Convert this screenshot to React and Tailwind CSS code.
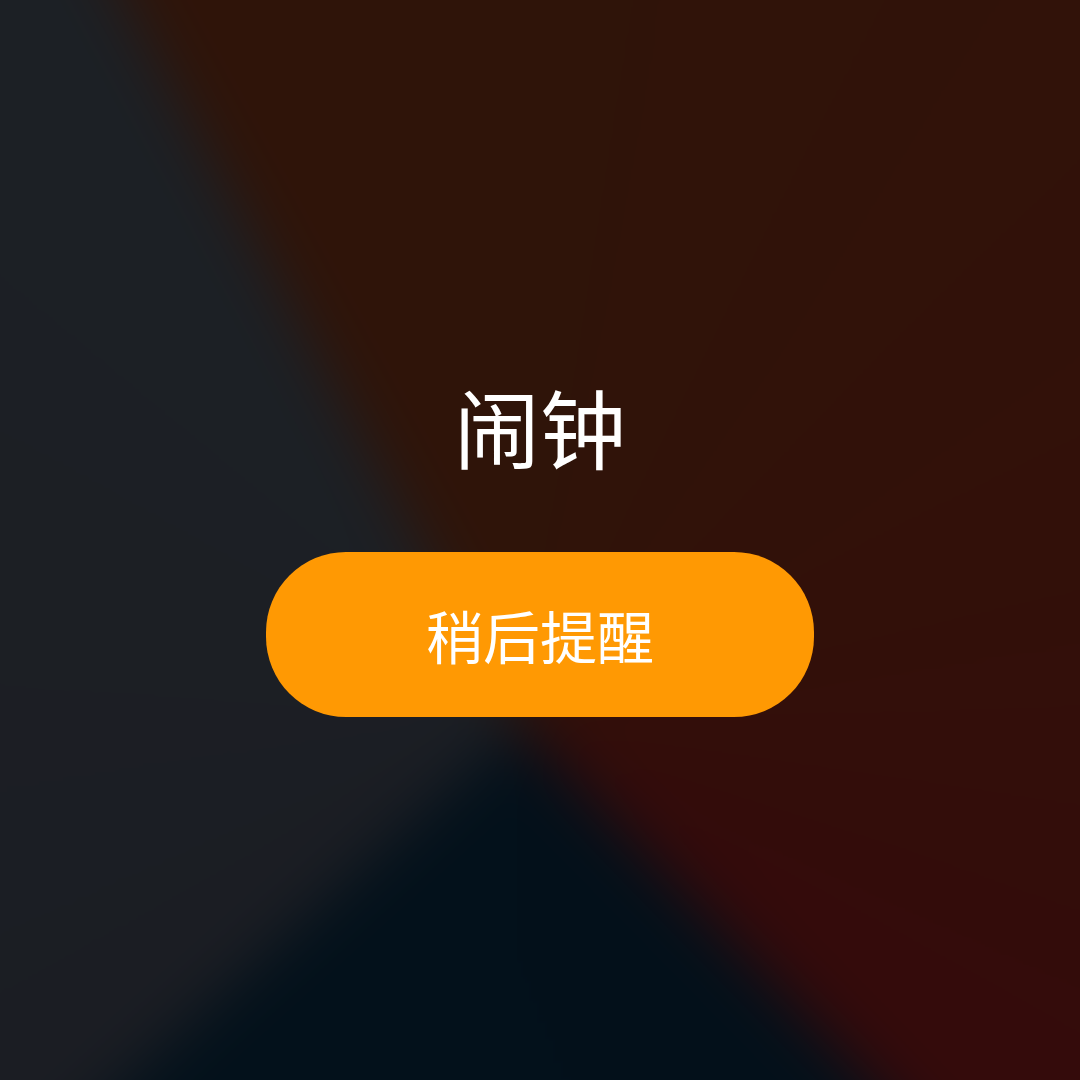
import React from "react";

/* blurred wedge wallpaper behind the alarm alert */
function Wallpaper() {
  return (
    <div className="absolute inset-0 overflow-hidden">
      <div className="absolute -inset-[100px] blur-[30px] bg-[conic-gradient(from_0deg_at_620px_826px,#2f1409_0deg,#321009_70deg,#340a0b_135deg,#03101a_136deg,#03111b_227deg,#1b1d23_229deg,#1c2025_331deg,#2f1409_332deg)]" />
    </div>
  );
}

export default function App() {
  return (
    <div className="relative w-full h-[1080px] overflow-hidden bg-[#1b1d23] font-['Noto_Sans_CJK_SC','Noto_Sans',sans-serif]">
      <Wallpaper />
      <div className="relative flex flex-col items-center pt-[383px]">
        <h1 className="text-[86px] leading-none font-normal text-white">闹钟</h1>
        <button className="mt-[83px] w-[548px] h-[165px] rounded-[80px] bg-[#ff9903] flex items-center justify-center">
          <span className="text-[57px] leading-none font-normal text-white">稍后提醒</span>
        </button>
      </div>
    </div>
  );
}
